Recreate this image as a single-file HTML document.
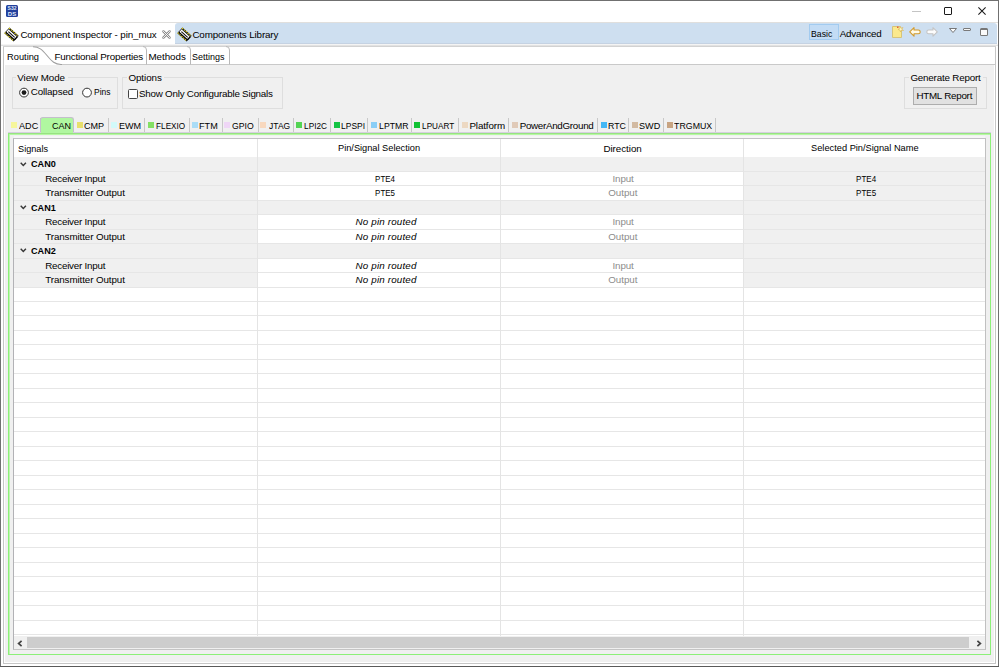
<!DOCTYPE html>
<html><head><meta charset="utf-8"><style>
html,body{margin:0;padding:0;}
body{width:999px;height:667px;overflow:hidden;position:relative;background:#fff;font-family:"Liberation Sans",sans-serif;font-size:9.8px;color:#000;}
.a{position:absolute;}
.t{position:absolute;white-space:nowrap;line-height:11px;}
svg{position:absolute;overflow:visible}
</style></head><body>
<div class="a" style="left:0px;top:0px;width:999px;height:667px;background:#fff;"></div>
<div class="a" style="left:0px;top:0px;width:999px;height:1px;background:#707070;"></div>
<div class="a" style="left:0px;top:0px;width:1px;height:667px;background:#707070;"></div>
<div class="a" style="left:998px;top:0px;width:1px;height:667px;background:#707070;"></div>
<div class="a" style="left:0px;top:666px;width:999px;height:1px;background:#5a5a5a;"></div>
<svg style="left:6px;top:5px" width="12" height="12"><rect x="0" y="0" width="12" height="12" rx="1.5" fill="#23409c"/><text x="6" y="5" font-size="5" fill="#dfe6f6" text-anchor="middle" font-family="Liberation Sans" font-weight="bold">S32</text><text x="6" y="10.5" font-size="6" fill="#dfe6f6" text-anchor="middle" font-family="Liberation Sans" font-weight="bold">DS</text></svg>
<div class="a" style="left:912px;top:11px;width:9px;height:1px;background:#c4c4c4;"></div>
<div class="a" style="left:944px;top:7px;width:8px;height:8px;background:transparent;box-sizing:border-box;border:1px solid #1a1a1a;border-radius:1px"></div>
<svg style="left:977.5px;top:7px" width="8" height="8"><path d="M0.4 0.4L7.6 7.6M7.6 0.4L0.4 7.6" stroke="#1a1a1a" stroke-width="1.05"/></svg>
<div class="a" style="left:1px;top:22px;width:997px;height:1px;background:#e0dfdd;"></div>
<div class="a" style="left:175px;top:23px;width:822px;height:20px;background:#cedff0;border-radius:3px 3px 0 0"></div>
<div class="a" style="left:175px;top:43px;width:822px;height:1px;background:#c5d2e2;"></div>
<div class="a" style="left:1px;top:44px;width:997px;height:1px;background:#f4f4f4;"></div>
<div class="a" style="left:1px;top:45px;width:997px;height:1px;background:#e2e2e2;"></div>
<svg style="left:5px;top:27.5px" width="13" height="13" viewBox="0 0 13 13"><g transform="rotate(42 6.5 6.5)"><line x1="0.3" y1="3.4" x2="12.7" y2="3.4" stroke="#1a1a1a" stroke-width="1.5"/><line x1="0.3" y1="9.6" x2="12.7" y2="9.6" stroke="#1a1a1a" stroke-width="1.5"/><line x1="0.3" y1="3.4" x2="12.7" y2="3.4" stroke="#f2e41c" stroke-width="1.6" stroke-dasharray="1.2 1.3"/><line x1="0.3" y1="9.6" x2="12.7" y2="9.6" stroke="#f2e41c" stroke-width="1.6" stroke-dasharray="1.2 1.3"/><rect x="0.6" y="4.3" width="11.8" height="4.4" fill="#fff" stroke="#222" stroke-width="0.9"/><line x1="12.2" y1="4.2" x2="12.2" y2="8.8" stroke="#000" stroke-width="1.4"/><line x1="0.8" y1="8.5" x2="12.4" y2="8.5" stroke="#000" stroke-width="1"/><line x1="2.2" y1="6.5" x2="10.8" y2="6.5" stroke="#111" stroke-width="1.1"/></g></svg>
<div class="t" style="left:20.40px;top:29px;letter-spacing:-0.111px;">Component Inspector - pin_mux</div>
<svg style="left:162px;top:30px" width="9" height="9" viewBox="0 0 9 9"><path d="M1.4 1.4L7.6 7.6M7.6 1.4L1.4 7.6" stroke="#8a8a8a" stroke-width="2.4" stroke-linecap="round"/><path d="M1.4 1.4L7.6 7.6M7.6 1.4L1.4 7.6" stroke="#fff" stroke-width="0.9" stroke-linecap="round"/></svg>
<svg style="left:177.5px;top:27.5px" width="13" height="13" viewBox="0 0 13 13"><g transform="rotate(42 6.5 6.5)"><line x1="0.3" y1="3.4" x2="12.7" y2="3.4" stroke="#1a1a1a" stroke-width="1.5"/><line x1="0.3" y1="9.6" x2="12.7" y2="9.6" stroke="#1a1a1a" stroke-width="1.5"/><line x1="0.3" y1="3.4" x2="12.7" y2="3.4" stroke="#f2e41c" stroke-width="1.6" stroke-dasharray="1.2 1.3"/><line x1="0.3" y1="9.6" x2="12.7" y2="9.6" stroke="#f2e41c" stroke-width="1.6" stroke-dasharray="1.2 1.3"/><rect x="0.6" y="4.3" width="11.8" height="4.4" fill="#fff" stroke="#222" stroke-width="0.9"/><line x1="12.2" y1="4.2" x2="12.2" y2="8.8" stroke="#000" stroke-width="1.4"/><line x1="0.8" y1="8.5" x2="12.4" y2="8.5" stroke="#000" stroke-width="1"/><line x1="2.2" y1="6.5" x2="10.8" y2="6.5" stroke="#111" stroke-width="1.1"/></g></svg>
<div class="t" style="left:192.40px;top:29px;letter-spacing:-0.130px;">Components Library</div>
<div class="a" style="left:809px;top:24px;width:30px;height:16px;background:#c3dcf5;box-sizing:border-box;border:1px solid #a2cbf0"></div>
<div class="t" style="left:811.40px;top:28px;transform:scaleX(0.887);transform-origin:0.6px 0;">Basic</div>
<div class="t" style="left:839.80px;top:28px;letter-spacing:-0.232px;">Advanced</div>
<svg style="left:892px;top:26px" width="12" height="12" viewBox="0 0 12 12"><path d="M0.5 0.5H7.5L9.5 2.5V11.5H0.5Z" fill="#fbe98c" stroke="#d6c47a" stroke-width="1"/><path d="M8 0L9 2.2L11 1.5L9.8 3.2L11.5 4.5L9.3 4.3L8.5 6L8 4L6 3.5L7.8 2.5Z" fill="#fff6c8" stroke="#d8b450" stroke-width="0.6"/><rect x="5" y="0.5" width="1.5" height="1.5" fill="#e06040"/></svg>
<svg style="left:909px;top:27px" width="12" height="10" viewBox="0 0 12 10"><path d="M0.7 4.8L5 0.6V3H9.3A1.9 1.9 0 0 1 9.3 6.8H5V9.2Z" fill="#fffbe8" stroke="#d29a2c" stroke-width="1.1" stroke-linejoin="round"/></svg>
<svg style="left:926px;top:27px" width="12" height="10" viewBox="0 0 12 10"><path d="M11.3 4.8L7 0.6V3H2.7A1.9 1.9 0 0 0 2.7 6.8H7V9.2Z" fill="#fcfcfc" stroke="#c4c4c4" stroke-width="1.1" stroke-linejoin="round"/></svg>
<svg style="left:949px;top:28px" width="8" height="5" viewBox="0 0 8 5"><path d="M0.5 0.5H7.5L4 4.5Z" fill="#fff" stroke="#6a6a6a" stroke-width="0.9"/></svg>
<div class="a" style="left:963px;top:28px;width:8px;height:3px;background:#f4f4f4;box-sizing:border-box;border:1px solid #7a7a7a;border-radius:1px"></div>
<div class="a" style="left:980px;top:28px;width:8px;height:8px;background:#fafafa;box-sizing:border-box;border:1px solid #777;border-top-width:2px;border-radius:1.5px"></div>
<div class="a" style="left:3px;top:46px;width:1px;height:618px;background:#c6c6c6;"></div>
<div class="a" style="left:995px;top:46px;width:1px;height:618px;background:#c6c6c6;"></div>
<div class="a" style="left:3px;top:663px;width:993px;height:1px;background:#c6c6c6;"></div>
<div class="a" style="left:3px;top:46px;width:993px;height:1px;background:#d2d2d2;"></div>
<div class="a" style="left:5px;top:65px;width:989px;height:597px;background:#f0f0f0;"></div>
<div class="a" style="left:60px;top:64px;width:935px;height:1px;background:#c9c9c9;"></div>
<svg style="left:30px;top:44px" width="32" height="22" viewBox="0 0 32 22"><path d="M3 2.7 C9 2.7 12 5.5 17 11.5 C22 17.5 25 20.5 31 20.5 H32" fill="none" stroke="#a0a0a0" stroke-width="1.1"/></svg>
<svg style="left:143px;top:46px" width="5" height="19" viewBox="0 0 5 19"><path d="M0 0.5 Q3.5 0.5 3.5 4 V18.5" fill="none" stroke="#b8b8b8" stroke-width="1"/></svg>
<svg style="left:187px;top:46px" width="5" height="19" viewBox="0 0 5 19"><path d="M0 0.5 Q3.5 0.5 3.5 4 V18.5" fill="none" stroke="#b8b8b8" stroke-width="1"/></svg>
<svg style="left:226px;top:46px" width="5" height="19" viewBox="0 0 5 19"><path d="M0 0.5 Q3.5 0.5 3.5 4 V18.5" fill="none" stroke="#b8b8b8" stroke-width="1"/></svg>
<div class="t" style="left:7.40px;top:51px;transform:scaleX(0.947);transform-origin:0.6px 0;">Routing</div>
<div class="t" style="left:54.40px;top:51px;letter-spacing:-0.189px;">Functional Properties</div>
<div class="t" style="left:148.40px;top:51px;letter-spacing:-0.013px;">Methods</div>
<div class="t" style="left:192.40px;top:51px;transform:scaleX(0.917);transform-origin:0.6px 0;">Settings</div>
<div class="a" style="left:12px;top:77px;width:106px;height:32px;background:transparent;box-sizing:border-box;border:1px solid #dedede"></div>
<div class="a" style="left:15.899999999999999px;top:77px;width:51.699999999999996px;height:1px;background:#f0f0f0;"></div>
<div class="t" style="left:17.30px;top:72px;letter-spacing:-0.067px;">View Mode</div>
<div class="a" style="left:122px;top:77px;width:161px;height:32px;background:transparent;box-sizing:border-box;border:1px solid #dedede"></div>
<div class="a" style="left:127px;top:77px;width:37px;height:1px;background:#f0f0f0;"></div>
<div class="t" style="left:128.40px;top:72px;letter-spacing:-0.044px;">Options</div>
<div class="a" style="left:904px;top:77px;width:83px;height:32px;background:transparent;box-sizing:border-box;border:1px solid #dedede"></div>
<div class="a" style="left:909px;top:77px;width:74px;height:1px;background:#f0f0f0;"></div>
<div class="t" style="left:910.40px;top:72px;letter-spacing:-0.189px;">Generate Report</div>
<svg style="left:19px;top:88px" width="10" height="10" viewBox="0 0 10 10"><circle cx="5" cy="4.6" r="4.4" fill="#fff" stroke="#333" stroke-width="1"/><circle cx="5" cy="4.6" r="2.4" fill="#1a1a1a"/></svg>
<div class="t" style="left:30.70px;top:86px;letter-spacing:-0.134px;">Collapsed</div>
<svg style="left:82px;top:88px" width="10" height="10" viewBox="0 0 10 10"><circle cx="5" cy="4.6" r="4.4" fill="#fff" stroke="#333" stroke-width="1"/></svg>
<div class="t" style="left:93.60px;top:86px;transform:scaleX(0.862);transform-origin:0.6px 0;">Pins</div>
<div class="a" style="left:128px;top:89px;width:10px;height:10px;background:#fdfdfd;box-sizing:border-box;border:1px solid #444;border-radius:1.5px"></div>
<div class="t" style="left:139.00px;top:88px;letter-spacing:-0.228px;">Show Only Configurable Signals</div>
<div class="a" style="left:913px;top:87px;width:64px;height:18px;background:#e1e1e1;box-sizing:border-box;border:1px solid #adadad"></div>
<div class="t" style="left:916.40px;top:90px;letter-spacing:-0.247px;">HTML Report</div>
<div class="a" style="left:40px;top:118px;width:1px;height:14px;background:#c8c8c8;"></div>
<div class="a" style="left:11px;top:122px;width:6px;height:6px;background:#f6f69c;"></div>
<div class="t" style="left:18.65px;top:120px;transform:scaleX(0.925);transform-origin:0.6px 0;">ADC</div>
<div class="a" style="left:40px;top:117px;width:34px;height:16px;background:#b0f7a0;box-sizing:border-box;border:1px solid #c4bfcc;border-bottom:none;border-radius:3px 3px 0 0"></div>
<div class="t" style="left:51.70px;top:120px;transform:scaleX(0.920);transform-origin:0.6px 0;">CAN</div>
<div class="a" style="left:108px;top:118px;width:1px;height:14px;background:#c8c8c8;"></div>
<div class="a" style="left:77px;top:122px;width:6px;height:6px;background:#e8e06c;"></div>
<div class="t" style="left:84.40px;top:120px;transform:scaleX(0.924);transform-origin:0.6px 0;">CMP</div>
<div class="a" style="left:144px;top:118px;width:1px;height:14px;background:#c8c8c8;"></div>
<div class="a" style="left:111px;top:122px;width:6px;height:6px;background:#d2fafa;"></div>
<div class="t" style="left:119.00px;top:120px;transform:scaleX(0.923);transform-origin:0.6px 0;">EWM</div>
<div class="a" style="left:189px;top:118px;width:1px;height:14px;background:#c8c8c8;"></div>
<div class="a" style="left:148px;top:122px;width:6px;height:6px;background:#84e064;"></div>
<div class="t" style="left:156.20px;top:120px;transform:scaleX(0.835);transform-origin:0.6px 0;">FLEXIO</div>
<div class="a" style="left:222px;top:118px;width:1px;height:14px;background:#c8c8c8;"></div>
<div class="a" style="left:192px;top:122px;width:6px;height:6px;background:#aadcf6;"></div>
<div class="t" style="left:199.40px;top:120px;transform:scaleX(0.929);transform-origin:0.6px 0;">FTM</div>
<div class="a" style="left:258px;top:118px;width:1px;height:14px;background:#c8c8c8;"></div>
<div class="a" style="left:224px;top:122px;width:6px;height:6px;background:#efd6f6;"></div>
<div class="t" style="left:231.90px;top:120px;transform:scaleX(0.886);transform-origin:0.6px 0;">GPIO</div>
<div class="a" style="left:293px;top:118px;width:1px;height:14px;background:#c8c8c8;"></div>
<div class="a" style="left:260px;top:122px;width:6px;height:6px;background:#f8d8be;"></div>
<div class="t" style="left:269.40px;top:120px;transform:scaleX(0.866);transform-origin:0.6px 0;">JTAG</div>
<div class="a" style="left:330px;top:118px;width:1px;height:14px;background:#c8c8c8;"></div>
<div class="a" style="left:296px;top:122px;width:6px;height:6px;background:#54d454;"></div>
<div class="t" style="left:304.10px;top:120px;transform:scaleX(0.840);transform-origin:0.6px 0;">LPI2C</div>
<div class="a" style="left:367px;top:118px;width:1px;height:14px;background:#c8c8c8;"></div>
<div class="a" style="left:334px;top:122px;width:6px;height:6px;background:#14c444;"></div>
<div class="t" style="left:341.40px;top:120px;transform:scaleX(0.862);transform-origin:0.6px 0;">LPSPI</div>
<div class="a" style="left:411px;top:118px;width:1px;height:14px;background:#c8c8c8;"></div>
<div class="a" style="left:371px;top:122px;width:6px;height:6px;background:#8acef6;"></div>
<div class="t" style="left:378.90px;top:120px;transform:scaleX(0.885);transform-origin:0.6px 0;">LPTMR</div>
<div class="a" style="left:458px;top:118px;width:1px;height:14px;background:#c8c8c8;"></div>
<div class="a" style="left:414px;top:122px;width:6px;height:6px;background:#12c234;"></div>
<div class="t" style="left:422.40px;top:120px;transform:scaleX(0.834);transform-origin:0.6px 0;">LPUART</div>
<div class="a" style="left:508px;top:118px;width:1px;height:14px;background:#c8c8c8;"></div>
<div class="a" style="left:462px;top:122px;width:6px;height:6px;background:#ecd8c2;"></div>
<div class="t" style="left:469.40px;top:120px;letter-spacing:-0.102px;">Platform</div>
<div class="a" style="left:597px;top:118px;width:1px;height:14px;background:#c8c8c8;"></div>
<div class="a" style="left:512px;top:122px;width:6px;height:6px;background:#e0cab8;"></div>
<div class="t" style="left:519.70px;top:120px;letter-spacing:-0.295px;">PowerAndGround</div>
<div class="a" style="left:628px;top:118px;width:1px;height:14px;background:#c8c8c8;"></div>
<div class="a" style="left:601px;top:122px;width:6px;height:6px;background:#44b8f6;"></div>
<div class="t" style="left:607.70px;top:120px;transform:scaleX(0.897);transform-origin:0.6px 0;">RTC</div>
<div class="a" style="left:663px;top:118px;width:1px;height:14px;background:#c8c8c8;"></div>
<div class="a" style="left:632px;top:122px;width:6px;height:6px;background:#d2baa2;"></div>
<div class="t" style="left:638.80px;top:120px;transform:scaleX(0.929);transform-origin:0.6px 0;">SWD</div>
<div class="a" style="left:715px;top:118px;width:1px;height:14px;background:#c8c8c8;"></div>
<div class="a" style="left:667px;top:122px;width:6px;height:6px;background:#c8a482;"></div>
<div class="t" style="left:674.40px;top:120px;transform:scaleX(0.898);transform-origin:0.6px 0;">TRGMUX</div>
<div class="a" style="left:8px;top:132px;width:983px;height:1px;background:#d6cfe0;"></div>
<div class="a" style="left:14px;top:136px;width:971px;height:2px;background:#f6f6f6;"></div>
<div class="a" style="left:8px;top:133px;width:983px;height:522px;background:transparent;box-sizing:border-box;border:1px solid #8cf078;border-top-color:#98e282"></div>
<div class="a" style="left:9px;top:134px;width:1px;height:520px;background:#bff5b0;"></div>
<div class="a" style="left:41px;top:132px;width:32px;height:1px;background:#b0f7a0;"></div>
<div class="a" style="left:9px;top:134px;width:981px;height:1px;background:#b6f8a4;"></div>
<div class="a" style="left:13px;top:138px;width:973px;height:512px;background:#fff;box-sizing:border-box;border:1px solid #b2b2b6;border-top-color:#c2c2c6;border-right-color:#c0c0c0;border-bottom-color:#c4c4c4"></div>
<div class="a" style="left:14px;top:157px;width:971px;height:14px;background:#f0f0f0;"></div>
<div class="a" style="left:14px;top:171px;width:243px;height:14px;background:#f0f0f0;"></div>
<div class="a" style="left:744px;top:171px;width:241px;height:14px;background:#f0f0f0;"></div>
<div class="a" style="left:14px;top:185px;width:243px;height:15px;background:#f0f0f0;"></div>
<div class="a" style="left:744px;top:185px;width:241px;height:15px;background:#f0f0f0;"></div>
<div class="a" style="left:14px;top:200px;width:971px;height:14px;background:#f0f0f0;"></div>
<div class="a" style="left:14px;top:214px;width:243px;height:15px;background:#f0f0f0;"></div>
<div class="a" style="left:744px;top:214px;width:241px;height:15px;background:#f0f0f0;"></div>
<div class="a" style="left:14px;top:229px;width:243px;height:14px;background:#f0f0f0;"></div>
<div class="a" style="left:744px;top:229px;width:241px;height:14px;background:#f0f0f0;"></div>
<div class="a" style="left:14px;top:243px;width:971px;height:15px;background:#f0f0f0;"></div>
<div class="a" style="left:14px;top:258px;width:243px;height:14px;background:#f0f0f0;"></div>
<div class="a" style="left:744px;top:258px;width:241px;height:14px;background:#f0f0f0;"></div>
<div class="a" style="left:14px;top:272px;width:243px;height:15px;background:#f0f0f0;"></div>
<div class="a" style="left:744px;top:272px;width:241px;height:15px;background:#f0f0f0;"></div>
<div class="a" style="left:14px;top:171px;width:971px;height:1px;background:#e6e6e6;"></div>
<div class="a" style="left:14px;top:185px;width:971px;height:1px;background:#e6e6e6;"></div>
<div class="a" style="left:14px;top:200px;width:971px;height:1px;background:#e6e6e6;"></div>
<div class="a" style="left:14px;top:214px;width:971px;height:1px;background:#e6e6e6;"></div>
<div class="a" style="left:14px;top:229px;width:971px;height:1px;background:#e6e6e6;"></div>
<div class="a" style="left:14px;top:243px;width:971px;height:1px;background:#e6e6e6;"></div>
<div class="a" style="left:14px;top:258px;width:971px;height:1px;background:#e6e6e6;"></div>
<div class="a" style="left:14px;top:272px;width:971px;height:1px;background:#e6e6e6;"></div>
<div class="a" style="left:14px;top:287px;width:971px;height:1px;background:#e6e6e6;"></div>
<div class="a" style="left:14px;top:301px;width:971px;height:1px;background:#e6e6e6;"></div>
<div class="a" style="left:14px;top:315px;width:971px;height:1px;background:#e6e6e6;"></div>
<div class="a" style="left:14px;top:330px;width:971px;height:1px;background:#e6e6e6;"></div>
<div class="a" style="left:14px;top:344px;width:971px;height:1px;background:#e6e6e6;"></div>
<div class="a" style="left:14px;top:359px;width:971px;height:1px;background:#e6e6e6;"></div>
<div class="a" style="left:14px;top:373px;width:971px;height:1px;background:#e6e6e6;"></div>
<div class="a" style="left:14px;top:388px;width:971px;height:1px;background:#e6e6e6;"></div>
<div class="a" style="left:14px;top:402px;width:971px;height:1px;background:#e6e6e6;"></div>
<div class="a" style="left:14px;top:417px;width:971px;height:1px;background:#e6e6e6;"></div>
<div class="a" style="left:14px;top:431px;width:971px;height:1px;background:#e6e6e6;"></div>
<div class="a" style="left:14px;top:446px;width:971px;height:1px;background:#e6e6e6;"></div>
<div class="a" style="left:14px;top:460px;width:971px;height:1px;background:#e6e6e6;"></div>
<div class="a" style="left:14px;top:475px;width:971px;height:1px;background:#e6e6e6;"></div>
<div class="a" style="left:14px;top:489px;width:971px;height:1px;background:#e6e6e6;"></div>
<div class="a" style="left:14px;top:504px;width:971px;height:1px;background:#e6e6e6;"></div>
<div class="a" style="left:14px;top:518px;width:971px;height:1px;background:#e6e6e6;"></div>
<div class="a" style="left:14px;top:533px;width:971px;height:1px;background:#e6e6e6;"></div>
<div class="a" style="left:14px;top:547px;width:971px;height:1px;background:#e6e6e6;"></div>
<div class="a" style="left:14px;top:562px;width:971px;height:1px;background:#e6e6e6;"></div>
<div class="a" style="left:14px;top:576px;width:971px;height:1px;background:#e6e6e6;"></div>
<div class="a" style="left:14px;top:591px;width:971px;height:1px;background:#e6e6e6;"></div>
<div class="a" style="left:14px;top:605px;width:971px;height:1px;background:#e6e6e6;"></div>
<div class="a" style="left:14px;top:620px;width:971px;height:1px;background:#e6e6e6;"></div>
<div class="a" style="left:14px;top:634px;width:971px;height:1px;background:#e6e6e6;"></div>
<div class="a" style="left:257px;top:139px;width:1px;height:498px;background:#e4e4e4;"></div>
<div class="a" style="left:500px;top:139px;width:1px;height:498px;background:#e4e4e4;"></div>
<div class="a" style="left:743px;top:139px;width:1px;height:498px;background:#e4e4e4;"></div>
<div class="t" style="left:18.30px;top:143px;transform:scaleX(0.933);transform-origin:0.6px 0;">Signals</div>
<div class="t" style="left:337.90px;top:142px;transform:scaleX(0.941);transform-origin:0.6px 0;">Pin/Signal Selection</div>
<div class="t" style="left:603.40px;top:143px;letter-spacing:-0.039px;">Direction</div>
<div class="t" style="left:811.00px;top:142px;transform:scaleX(0.945);transform-origin:0.6px 0;">Selected Pin/Signal Name</div>
<svg style="left:19.5px;top:161.6px" width="7" height="5" viewBox="0 0 7 5"><path d="M0.7 0.7L3.3 3.4L5.9 0.7" fill="none" stroke="#383838" stroke-width="1.45"/></svg>
<div class="t" style="left:30.90px;top:158px;transform:scaleX(0.928);transform-origin:0.6px 0;font-weight:bold;">CAN0</div>
<div class="t" style="left:45.20px;top:173px;letter-spacing:-0.227px;">Receiver Input</div>
<div class="t" style="left:375.40px;top:173px;transform:scaleX(0.810);transform-origin:0.6px 0;">PTE4</div>
<div class="t" style="left:856.10px;top:173px;transform:scaleX(0.818);transform-origin:0.6px 0;">PTE4</div>
<div class="t" style="left:612.40px;top:173px;letter-spacing:-0.092px;color:#8c8c8c;">Input</div>
<div class="t" style="left:45.20px;top:187px;letter-spacing:-0.093px;">Transmitter Output</div>
<div class="t" style="left:375.40px;top:187px;transform:scaleX(0.810);transform-origin:0.6px 0;">PTE5</div>
<div class="t" style="left:856.10px;top:187px;transform:scaleX(0.818);transform-origin:0.6px 0;">PTE5</div>
<div class="t" style="left:608.30px;top:187px;letter-spacing:-0.058px;color:#8c8c8c;">Output</div>
<svg style="left:19.5px;top:204.6px" width="7" height="5" viewBox="0 0 7 5"><path d="M0.7 0.7L3.3 3.4L5.9 0.7" fill="none" stroke="#383838" stroke-width="1.45"/></svg>
<div class="t" style="left:30.90px;top:202px;transform:scaleX(0.928);transform-origin:0.6px 0;font-weight:bold;">CAN1</div>
<div class="t" style="left:45.20px;top:216px;letter-spacing:-0.227px;">Receiver Input</div>
<div class="t" style="left:355.60px;top:216px;letter-spacing:0.161px;font-style:italic;">No pin routed</div>
<div class="t" style="left:612.40px;top:216px;letter-spacing:-0.092px;color:#8c8c8c;">Input</div>
<div class="t" style="left:45.20px;top:231px;letter-spacing:-0.093px;">Transmitter Output</div>
<div class="t" style="left:355.60px;top:231px;letter-spacing:0.161px;font-style:italic;">No pin routed</div>
<div class="t" style="left:608.30px;top:231px;letter-spacing:-0.058px;color:#8c8c8c;">Output</div>
<svg style="left:19.5px;top:247.6px" width="7" height="5" viewBox="0 0 7 5"><path d="M0.7 0.7L3.3 3.4L5.9 0.7" fill="none" stroke="#383838" stroke-width="1.45"/></svg>
<div class="t" style="left:30.90px;top:245px;transform:scaleX(0.928);transform-origin:0.6px 0;font-weight:bold;">CAN2</div>
<div class="t" style="left:45.20px;top:260px;letter-spacing:-0.227px;">Receiver Input</div>
<div class="t" style="left:355.60px;top:260px;letter-spacing:0.161px;font-style:italic;">No pin routed</div>
<div class="t" style="left:612.40px;top:260px;letter-spacing:-0.092px;color:#8c8c8c;">Input</div>
<div class="t" style="left:45.20px;top:274px;letter-spacing:-0.093px;">Transmitter Output</div>
<div class="t" style="left:355.60px;top:274px;letter-spacing:0.161px;font-style:italic;">No pin routed</div>
<div class="t" style="left:608.30px;top:274px;letter-spacing:-0.058px;color:#8c8c8c;">Output</div>
<div class="a" style="left:14px;top:636px;width:971px;height:13px;background:#f0f0f0;"></div>
<div class="a" style="left:27px;top:637px;width:942px;height:11px;background:#cdcdcd;"></div>
<svg style="left:17px;top:639.5px" width="6" height="7" viewBox="0 0 6 7"><path d="M4.6 0.9L1.6 3.5L4.6 6.1" fill="none" stroke="#444" stroke-width="1.7"/></svg>
<svg style="left:976px;top:639.5px" width="6" height="7" viewBox="0 0 6 7"><path d="M1.4 0.9L4.4 3.5L1.4 6.1" fill="none" stroke="#444" stroke-width="1.7"/></svg>
</body></html>
